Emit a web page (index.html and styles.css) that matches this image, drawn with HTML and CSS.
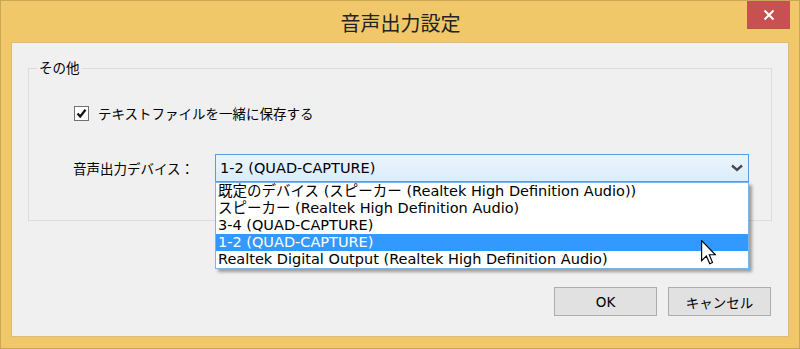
FILE: index.html
```html
<!DOCTYPE html>
<html lang="ja">
<head>
    <meta charset="UTF-8">
    <meta name="viewport" content="width=device-width, initial-scale=1.0">
    <title>音声出力設定</title>
    <link rel="stylesheet" href="styles.css">
</head>
<body>
    <div class="window">
        <div class="titlebar">
            <span></span>
            <h1 class="title">音声出力設定</h1>
            <button class="close-btn" aria-label="閉じる">
                <svg width="12" height="12" viewBox="0 0 12 12">
                    <path d="M1.5 1.5 L10.5 10.5 M10.5 1.5 L1.5 10.5" stroke="#fff" stroke-width="2" fill="none"/>
                </svg>
            </button>
        </div>
        <div class="client">
            <fieldset class="group">
                <legend>その他</legend>
                <div class="group-body">
                    <label class="check-row">
                        <span class="checkbox">
                            <svg width="11" height="11" viewBox="0 0 11 11">
                                <path d="M1.5 5.5 L4.2 8.5 L9.5 1.8" stroke="#111" stroke-width="2.2" fill="none"/>
                            </svg>
                        </span>
                        テキストファイルを一緒に保存する
                    </label>
                    <div class="device-row">
                        <span class="device-label">音声出力デバイス：</span>
                        <div class="combo">
                            <div class="combo-box">
                                <span>1-2 (QUAD-CAPTURE)</span>
                                <svg width="12" height="8" viewBox="0 0 12 8">
                                    <path d="M1 1.5 L6 6 L11 1.5" stroke="#4a4a4a" stroke-width="2.4" fill="none"/>
                                </svg>
                            </div>
                            <ul class="combo-list">
                                <li>既定のデバイス (スピーカー (Realtek High Definition Audio))</li>
                                <li>スピーカー (Realtek High Definition Audio)</li>
                                <li>3-4 (QUAD-CAPTURE)</li>
                                <li class="selected">1-2 (QUAD-CAPTURE)</li>
                                <li>Realtek Digital Output (Realtek High Definition Audio)</li>
                            </ul>
                        </div>
                    </div>
                </div>
            </fieldset>
            <div class="buttons">
                <button class="btn">OK</button>
                <button class="btn">キャンセル</button>
            </div>
        </div>
        <svg class="cursor" width="15" height="25" viewBox="0 0 12 20">
            <path d="M0.5 0.5 L0.5 16.5 L4.3 12.8 L7 19 L9.2 18 L6.6 11.8 L11.5 11.8 Z" fill="#fff" stroke="#000" stroke-width="0.9" stroke-linejoin="miter"/>
        </svg>
    </div>
</body>
</html>
```

FILE: styles.css
```css
body {
    margin: 0;
    font-family: "DejaVu Sans", "Noto Sans CJK JP", sans-serif;
    font-size: 13.5px;
    color: #000;
}
.window {
    position: relative;
    width: 800px;
    height: 349px;
    box-sizing: border-box;
    border: 1px solid #c9a755;
    background-color: #f0c86a;
    padding: 0 10px 11px 10px;
    display: flex;
    flex-direction: column;
}
.titlebar {
    height: 41px;
    display: grid;
    grid-template-columns: 1fr auto 1fr;
    margin-right: -1px;
}
.title {
    margin: 0;
    padding-top: 9px;
    font-family: "Noto Sans CJK JP", sans-serif;
    font-size: 20px;
    font-weight: normal;
    line-height: 26px;
    color: #222;
}
.close-btn {
    justify-self: end;
    width: 43px;
    height: 28px;
    border: none;
    padding: 0;
    background-color: #c75050;
    display: flex;
    align-items: center;
    justify-content: center;
}
.client {
    flex: 1;
    background-color: #f0f0f0;
    border: 1px solid #d9bd78;
    padding: 16px 16px 0 16px;
}
.group {
    margin: 0;
    border: 1px solid #dcdcdc;
    padding: 22px 0 38px 8px;
}
.group legend {
    padding: 0 2px;
    line-height: 18px;
}
.group-body {
    padding-left: 36px;
    display: flex;
    flex-direction: column;
    gap: 27px;
}
.check-row {
    height: 28px;
    display: flex;
    align-items: center;
    gap: 9px;
}
.checkbox {
    width: 13px;
    height: 13px;
    margin-left: 1px;
    border: 1px solid #707070;
    background-color: #fff;
    display: flex;
    align-items: center;
    justify-content: center;
}
.device-row {
    display: flex;
    align-items: center;
}
.device-label {
    width: 142px;
}
.combo {
    position: relative;
    width: 534px;
    font-size: 14.5px;
}
.combo-box {
    height: 28px;
    box-sizing: border-box;
    border: 1px solid #569de5;
    background: linear-gradient(#ebf4fc, #dcecfc);
    display: flex;
    align-items: center;
    justify-content: space-between;
    padding: 0 5px 0 4px;
}
.combo-list {
    position: absolute;
    top: 28px;
    left: 0;
    right: 0;
    margin: 0;
    padding: 0;
    list-style: none;
    background-color: #fff;
    border: 1px solid #7eb4ea;
    box-shadow: 3px 3px 3px rgba(0, 0, 0, 0.35);
    z-index: 2;
}
.combo-list li {
    height: 17px;
    line-height: 17px;
    padding-left: 2px;
    white-space: nowrap;
}
.combo-list li.selected {
    background-color: #3399ff;
    color: #fff;
}
.buttons {
    margin-top: 66px;
    padding-right: 1px;
    display: flex;
    justify-content: flex-end;
    gap: 11px;
}
.btn {
    width: 103px;
    height: 29px;
    border: 1px solid #adadad;
    background-color: #e1e1e1;
    font-family: inherit;
    font-size: 13.5px;
    color: #000;
    padding: 0;
}
.cursor {
    position: absolute;
    left: 700px;
    top: 239px;
    z-index: 3;
}
```
